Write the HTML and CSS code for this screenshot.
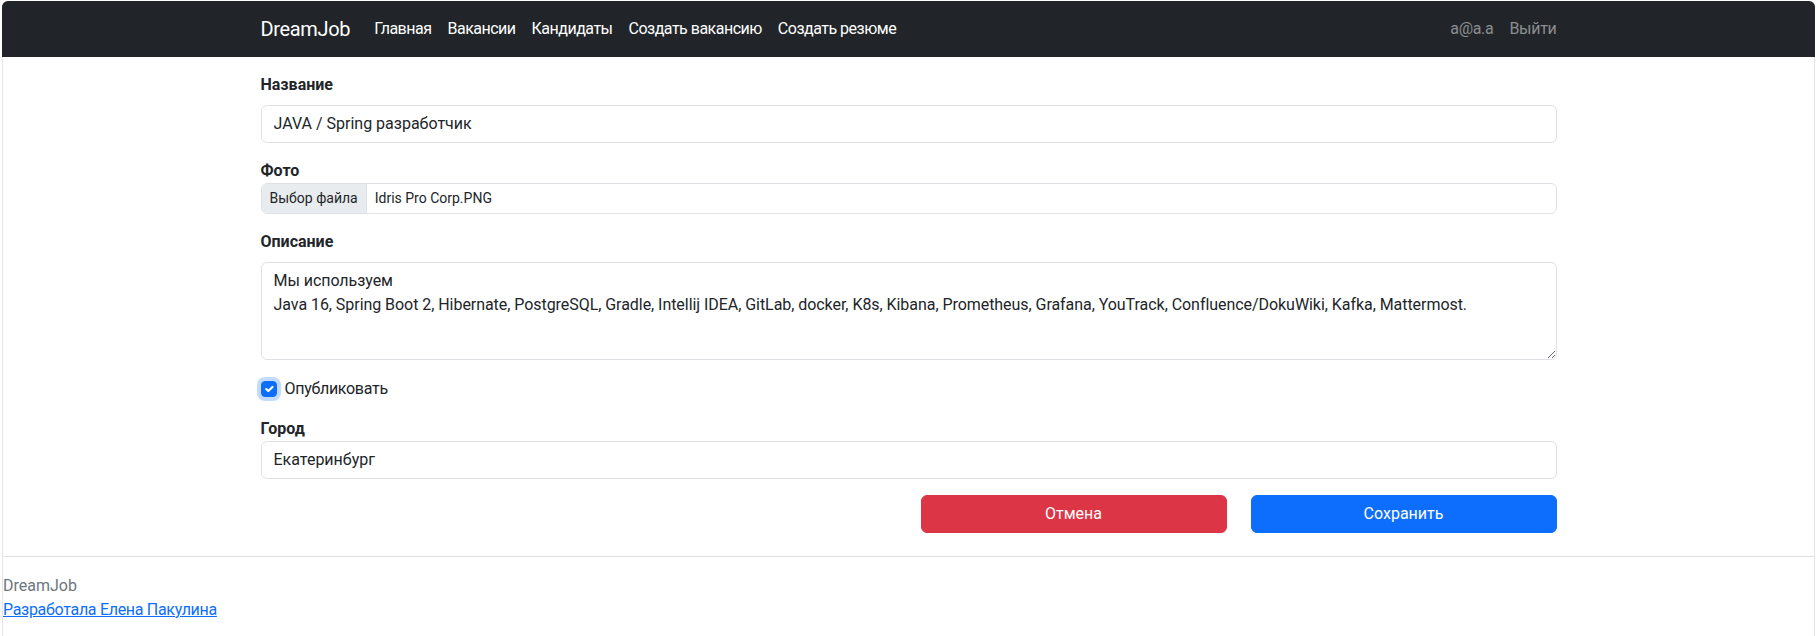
FILE: index.html
```html
<!DOCTYPE html>
<html lang="ru">
<head>
<meta charset="utf-8">
<title>DreamJob</title>
<link rel="stylesheet" href="styles.css">
</head>
<body>
<div class="page">
  <nav class="navbar">
    <div class="container nav-inner">
      <a class="brand" href="#">DreamJob</a>
      <div class="nav-links">
        <a class="nav-link" href="#">Главная</a>
        <a class="nav-link" href="#">Вакансии</a>
        <a class="nav-link" href="#">Кандидаты</a>
        <a class="nav-link" href="#">Создать вакансию</a>
        <a class="nav-link" href="#">Создать резюме</a>
      </div>
      <div class="nav-user">
        <a class="user-link" href="#">a@a.a</a>
        <a class="user-link last" href="#">Выйти</a>
      </div>
    </div>
  </nav>

  <main class="container">
    <form class="form">
      <div class="field">
        <label class="label">Название</label>
        <input class="input" type="text" value="JAVA / Spring разработчик">
      </div>
      <div class="field">
        <label class="label tight">Фото</label>
        <div class="file">
          <span class="file-btn">Выбор файла</span>
          <span class="file-name">Idris Pro Corp.PNG</span>
        </div>
      </div>
      <div class="field">
        <label class="label">Описание</label>
        <textarea class="input textarea">Мы используем
Java 16, Spring Boot 2, Hibernate, PostgreSQL, Gradle, Intellij IDEA, GitLab, docker, K8s, Kibana, Prometheus, Grafana, YouTrack, Confluence/DokuWiki, Kafka, Mattermost.</textarea>
      </div>
      <div class="field check">
        <span class="check-box">
          <svg viewBox="0 0 20 20" width="16" height="16"><path d="M6 10l3 3l6-6" fill="none" stroke="#fff" stroke-width="3" stroke-linecap="round" stroke-linejoin="round"/></svg>
        </span>
        <span class="check-label">Опубликовать</span>
      </div>
      <div class="field">
        <label class="label tight">Город</label>
        <input class="input" type="text" value="Екатеринбург">
      </div>
      <div class="actions">
        <button type="button" class="btn btn-danger">Отмена</button>
        <button type="button" class="btn btn-primary">Сохранить</button>
      </div>
    </form>
  </main>

  <footer class="footer">
    <div class="footer-title">DreamJob</div>
    <a class="footer-link" href="#">Разработала Елена Пакулина</a>
  </footer>
</div>
</body>
</html>
```

FILE: styles.css
```css
* { box-sizing: border-box; }

body {
  margin: 0;
  font-family: Roboto, "Liberation Sans", sans-serif;
  font-size: 16px;
  line-height: 1.5;
  color: #212529;
  background: #fff;
}

.page {
  margin: 1px 3px 0 2px;
  border-left: 1px solid #e3e5e8;
  border-right: 1px solid #e3e5e8;
  border-radius: 6px 6px 0 0;
  min-height: 700px;
}

.container {
  max-width: 1320px;
  margin: 0 auto;
  padding: 0 12px;
}

.navbar {
  background: #212529;
  border-radius: 6px 6px 0 0;
  padding: 8px 0;
  margin: 0 -1px;
}

.nav-inner {
  display: flex;
  align-items: center;
}

.brand {
  font-size: 20px;
  line-height: 30px;
  padding: 5px 0;
  margin-right: 16px;
  color: #fff;
  text-decoration: none;
  letter-spacing: -0.35px;
}

.nav-links {
  display: flex;
}

.nav-link {
  padding: 8px;
  color: #fff;
  text-decoration: none;
  letter-spacing: -0.5px;
}

.nav-user {
  display: flex;
  margin-left: auto;
}

.user-link {
  padding: 8px;
  color: #8b8d90;
  text-decoration: none;
  letter-spacing: -0.3px;
}

.user-link.last {
  padding-right: 0;
}

.form {
  margin-top: 16px;
}

.field {
  margin-bottom: 16px;
}

.label {
  display: block;
  font-weight: 700;
  margin-bottom: 8px;
}

.label.tight {
  margin-bottom: 0;
}

.input {
  display: block;
  width: 100%;
  padding: 6px 12px;
  font: inherit;
  line-height: 24px;
  color: #212529;
  background: #fff;
  border: 1px solid #dee2e6;
  border-radius: 6px;
  outline: none;
}

.textarea {
  height: 98px;
  resize: vertical;
  letter-spacing: -0.05px;
}

.file {
  display: flex;
  height: 31px;
  font-size: 14px;
  line-height: 21px;
  border: 1px solid #dee2e6;
  border-radius: 6px;
  overflow: hidden;
}

.file-btn {
  padding: 4px 8px;
  background: #e9ecef;
  border-right: 1px solid #dee2e6;
  margin-right: 8px;
}

.file-name {
  padding: 4px 0;
}

.check {
  display: flex;
  align-items: center;
  padding-top: 1px;
}

.check-box {
  width: 16px;
  height: 16px;
  border-radius: 4px;
  background: #0d6efd;
  border: 1px solid #0d6efd;
  box-shadow: 0 0 0 4px rgba(13, 110, 253, 0.25);
  display: flex;
  align-items: center;
  justify-content: center;
}

.check-box svg {
  width: 14px;
  height: 14px;
}

.check-label {
  margin-left: 8px;
  letter-spacing: -0.3px;
}

.actions {
  display: flex;
  justify-content: flex-end;
  gap: 24px;
  margin-bottom: 23px;
}

.btn {
  width: 306px;
  height: 38px;
  font: inherit;
  color: #fff;
  border: 1px solid transparent;
  border-radius: 6px;
}

.btn-danger {
  background: #dc3545;
  border-color: #dc3545;
}

.btn-primary {
  background: #0d6efd;
  border-color: #0d6efd;
}

.footer {
  border-top: 1px solid #dee2e6;
  padding-top: 17px;
}

.footer-title {
  color: #6c757d;
}

.footer-link {
  color: #0d6efd;
  text-decoration: underline;
  letter-spacing: -0.3px;
}
```
